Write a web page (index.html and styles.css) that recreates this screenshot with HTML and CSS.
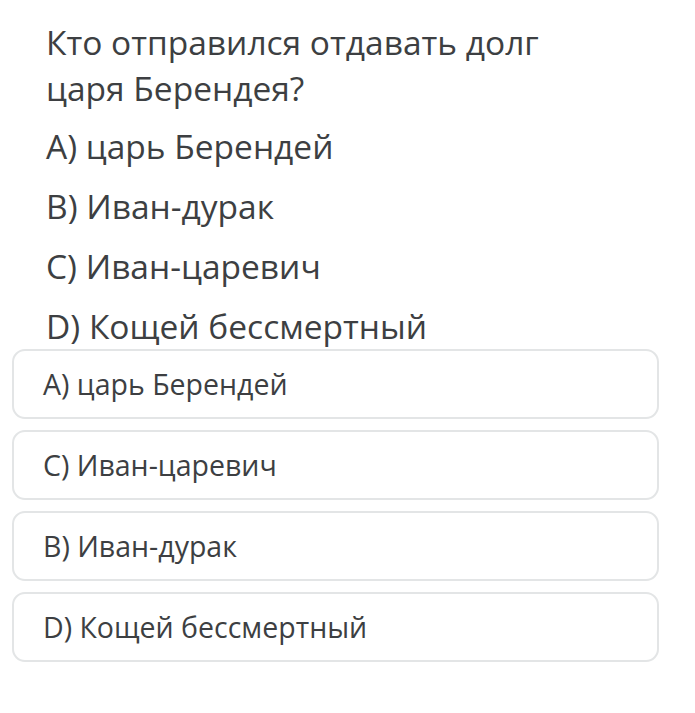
FILE: index.html
```html
<!DOCTYPE html>
<html lang="ru">
<head>
<meta charset="utf-8">
<link rel="stylesheet" href="styles.css">
</head>
<body>
<div class="page">
  <div class="question">
    <p class="title">Кто отправился отдавать долг<br>царя Берендея?</p>
    <p class="opt">A) царь Берендей</p>
    <p class="opt">B) Иван-дурак</p>
    <p class="opt">C) Иван-царевич</p>
    <p class="opt">D) Кощей бессмертный</p>
  </div>
  <div class="answers">
    <div class="answer">A) царь Берендей</div>
    <div class="answer">C) Иван-царевич</div>
    <div class="answer">B) Иван-дурак</div>
    <div class="answer">D) Кощей бессмертный</div>
  </div>
</div>
</body>
</html>
```

FILE: styles.css
```css
html, body {
  margin: 0;
  padding: 0;
  background: #ffffff;
}
body {
  font-family: "Open Sans", "Noto Sans", sans-serif;
  color: #3d3f42;
}
.page {
  width: 695px;
  height: 713px;
  overflow: hidden;
}
.question {
  padding: 19px 0 0 46px;
}
.title {
  margin: 0 0 12px;
  font-size: 33.5px;
  line-height: 46px;
}
.opt {
  margin: 0 0 14px;
  font-size: 33.5px;
  line-height: 46px;
}
.opt:last-child {
  margin-bottom: 0;
}
.answers {
  display: flex;
  flex-direction: column;
  gap: 11px;
  padding: 0 36px 0 12px;
}
.answer {
  height: 66px;
  border: 2px solid #e3e5e6;
  border-radius: 13px;
  display: flex;
  align-items: center;
  padding-left: 29px;
  font-size: 28.5px;
}
```
